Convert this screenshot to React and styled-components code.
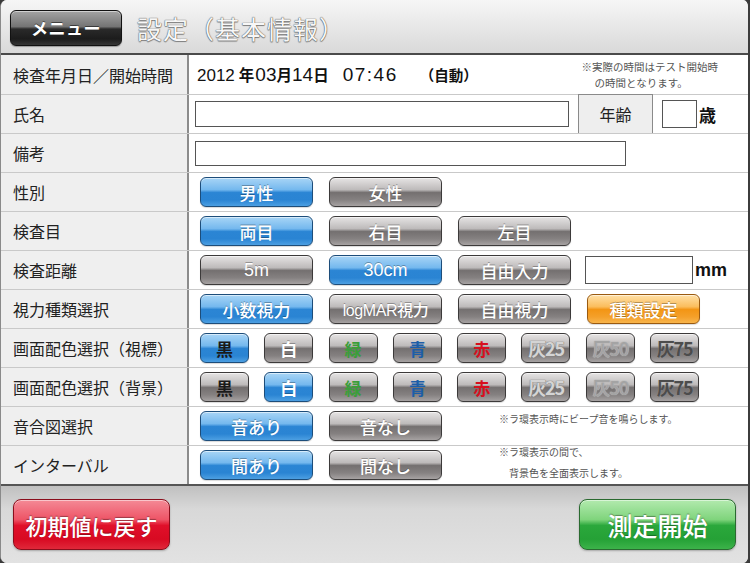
import React from 'react';
import styled, { createGlobalStyle, css } from 'styled-components';

const FONT = `"Liberation Sans", "Noto Sans CJK JP", sans-serif`;
const CJK = `"Noto Sans CJK JP", sans-serif`;

const GlobalStyle = createGlobalStyle`
  html, body { margin: 0; padding: 0; background: #3a3a3a; }
  body { font-family: ${FONT}; }
  * { box-sizing: border-box; }
`;

const Frame = styled.div`
  width: 750px;
  height: 563px;
  display: flex;
  flex-direction: column;
  border-radius: 7px;
  overflow: hidden;
  border-left: 1px solid #8a8a8a;
  border-right: 2px solid #3c3c3c;
  background: #fff;
`;

const Header = styled.header`
  flex: none;
  height: 55px;
  display: flex;
  align-items: center;
  gap: 15px;
  padding: 2px 0 0 9px;
  background: linear-gradient(#f6f6f6, #d9d9d9);
  border-bottom: 2px solid #4a4a4a;
`;

const MenuButton = styled.button`
  width: 112px;
  height: 36px;
  padding: 0;
  border: 1px solid #111;
  border-radius: 6px;
  background: linear-gradient(#a4a4a4 0%, #747474 46%, #2a2a2a 53%, #1c1c1c 82%, #363636 100%);
  box-shadow: inset 0 1px 0 rgba(255, 255, 255, 0.5), 0 1px 1px rgba(0, 0, 0, 0.3);
  color: #fff;
  font: 700 17px ${CJK};
  letter-spacing: 0.5px;
  text-shadow: 0 -1px 0 rgba(0, 0, 0, 0.5);
`;

const Title = styled.h1`
  margin: 0;
  font: 400 25px ${CJK};
  letter-spacing: 1px;
  color: #f7f7f7;
  text-shadow: 0 0 1px #5a5a5a, 0 0 1px #5a5a5a, 0 1px 1px #888;
`;

const Table = styled.div`
  flex: none;
  display: flex;
  flex-direction: column;
`;

const Row = styled.div`
  height: 39px;
  display: flex;
  border-top: 1px solid #c9c9c9;
  &:first-child { border-top: none; }
`;

const Label = styled.div`
  flex: none;
  width: 188px;
  display: flex;
  align-items: center;
  padding-left: 12px;
  background: #efefef;
  border-right: 2px solid #8c8c8c;
  font: 400 16px ${CJK};
  color: #222;
`;

const Value = styled.div`
  flex: 1;
  display: flex;
  align-items: center;
  padding-left: ${p => p.$pad ?? 11}px;
  gap: ${p => p.$gap ?? 0}px;
`;

const DateText = styled.div`
  display: flex;
  align-items: baseline;
  font: 400 17px ${FONT};
  color: #111;
  white-space: nowrap;
`;

const Num = styled.span`
  font-size: ${p => p.$size ?? 17}px;
  margin-left: ${p => p.$ml ?? 0}px;
  margin-right: ${p => p.$mr ?? 0}px;
  letter-spacing: ${p => p.$ls ?? 0}px;
`;

const Unit = styled.span`
  font: 600 15.5px ${CJK};
`;

const Auto = styled.span`
  font: 700 14.5px ${CJK};
  margin-left: 22px;
`;

const Note = styled.div`
  align-self: flex-start;
  margin-top: ${p => p.$top ?? 0}px;
  margin-left: ${p => (p.$left == null ? 'auto' : `${p.$left}px`)};
  margin-right: ${p => p.$right ?? 0}px;
  display: flex;
  flex-direction: column;
  gap: ${p => p.$lineGap ?? 4}px;
  font: 400 ${p => p.$size ?? 10}px ${CJK};
  line-height: 12px;
  color: #555;
  white-space: nowrap;
`;

const NoteLine = styled.span`
  padding-left: ${p => p.$indent ?? 0}px;
`;

const Field = styled.input`
  width: ${p => p.$w}px;
  height: ${p => p.$h}px;
  margin-left: ${p => p.$ml ?? 0}px;
  border: 1px solid #555;
  border-radius: 0;
  background: #fff;
  padding: 0 4px;
  outline: none;
`;

const AgeBox = styled.div`
  width: 75px;
  height: 40px;
  margin-left: 9px;
  display: flex;
  align-items: center;
  justify-content: center;
  background: #eeeeee;
  border: 1px solid #8a8a8a;
  font: 400 16px ${CJK};
  color: #222;
`;

const Suffix = styled.span`
  margin-left: ${p => p.$ml ?? 2}px;
  font: 700 ${p => p.$size ?? 17}px ${p => (p.$latin ? FONT : CJK)};
  color: #111;
  align-self: ${p => (p.$low ? 'flex-end' : 'center')};
  margin-bottom: ${p => (p.$low ? 8 : 0)}px;
`;

const looks = {
  blue: css`
    border-color: #1d4d7a;
    background: linear-gradient(#a8d5f6 0%, #74b8ee 42%, #2b85d4 52%, #2a84d3 78%, #4c9fe2 100%);
  `,
  gray: css`
    border-color: #3c3a3a;
    background: linear-gradient(#e6e4e4 0%, #bdbaba 42%, #747070 52%, #858181 78%, #a6a2a2 100%);
  `,
  orange: css`
    border-color: #9a5a10;
    background: linear-gradient(#ffe0a6 0%, #fbbd5c 42%, #f39514 52%, #f4a02a 78%, #f8b54c 100%);
  `,
};

const GlossButton = styled.button`
  flex: none;
  width: ${p => p.$w ?? 113}px;
  height: 30px;
  padding: 0;
  border: 1px solid;
  border-radius: 6px;
  ${p => looks[p.$look]}
  box-shadow: inset 0 1px 0 rgba(255, 255, 255, 0.55), 0 1px 1px rgba(0, 0, 0, 0.15);
  display: flex;
  align-items: center;
  justify-content: center;
  color: ${p => p.$ink ?? '#fff'};
  font: ${p => p.$weight ?? 500} ${p => p.$size ?? 17}px ${p => (p.$latin ? FONT : CJK)};
  letter-spacing: ${p => p.$ls ?? 0}px;
  text-shadow: ${p => p.$shadow ?? '0 -1px 0 rgba(0,0,0,0.3)'};
  white-space: nowrap;
`;

const Footer = styled.footer`
  flex: 1;
  display: flex;
  justify-content: space-between;
  align-items: flex-start;
  padding: 13px 12px 0 12px;
  border-top: 2px solid #555;
  background: linear-gradient(#c0c0c0 0%, #d8d8d8 30%, #e2e2e2 100%);
`;

const bigLooks = {
  red: css`
    border-color: #8a0e1c;
    background: linear-gradient(#f48a96 0%, #ee5466 40%, #e0102a 52%, #d80a22 80%, #e0283a 100%);
  `,
  green: css`
    border-color: #2a6a30;
    background: linear-gradient(#b2eaae 0%, #7fd47c 40%, #2ba83c 52%, #25a136 80%, #3cb34a 100%);
  `,
};

const BigButton = styled.button`
  width: 157px;
  height: 51px;
  padding: 0;
  border: 1px solid;
  border-radius: 8px;
  ${p => bigLooks[p.$look]}
  box-shadow: inset 0 1px 0 rgba(255, 255, 255, 0.5), 0 1px 2px rgba(0, 0, 0, 0.25);
  color: #fff;
  font: 500 ${p => p.$size ?? 22}px ${CJK};
  text-shadow: 0 -1px 1px rgba(0, 0, 0, 0.35);
`;

const colorSwatches = [
  { t: '黒', ink: '#1a1a1a', shadow: 'none' },
  { t: '白', ink: '#ffffff' },
  { t: '緑', ink: '#3a9e3a', shadow: 'none' },
  { t: '青', ink: '#1d5ea8', shadow: 'none' },
  { t: '赤', ink: '#d6101e', shadow: 'none' },
  { t: '灰25', ink: '#d4d4d4', shadow: '0 0 1px #777, 0 0 1px #777' },
  { t: '灰50', ink: '#a4a4a4', shadow: '0 0 1px #ddd, 0 0 1px #666' },
  { t: '灰75', ink: '#4c4c4c', shadow: '0 0 1px #999' },
];

function ColorRow({ selected }) {
  return (
    <Value $gap={15.3}>
      {colorSwatches.map((c, i) => (
        <GlossButton
          key={c.t}
          $w={49}
          $look={i === selected ? 'blue' : 'gray'}
          $ink={c.ink}
          $shadow={c.shadow}
          $weight={700}
          $size={c.t.length > 1 ? 18 : 17}
          $ls={c.t.length > 1 ? -1.2 : 0}
        >
          {c.t}
        </GlossButton>
      ))}
    </Value>
  );
}

export default function App() {
  return (
    <>
      <GlobalStyle />
      <Frame>
        <Header>
          <MenuButton>メニュー</MenuButton>
          <Title>設定（基本情報）</Title>
        </Header>

        <Table>
          <Row>
            <Label>検査年月日／開始時間</Label>
            <Value $pad={8}>
              <DateText>
                <Num $mr={4}>2012</Num>
                <Unit>年</Unit>
                <Num $size={19} $ml={1}>03</Num>
                <Unit>月</Unit>
                <Num $size={19}>14</Num>
                <Unit>日</Unit>
                <Num $size={19} $ml={14} $ls={1.5}>07:46</Num>
                <Auto>（自動）</Auto>
              </DateText>
              <Note $top={6} $right={30} $size={10.5} $lineGap={4}>
                <NoteLine>※実際の時間はテスト開始時</NoteLine>
                <NoteLine $indent={13}>の時間となります。</NoteLine>
              </Note>
            </Value>
          </Row>

          <Row>
            <Label>氏名</Label>
            <Value $pad={6}>
              <Field $w={374} $h={26} />
              <AgeBox>年齢</AgeBox>
              <Field $w={35} $h={28} $ml={9} />
              <Suffix>歳</Suffix>
            </Value>
          </Row>

          <Row>
            <Label>備考</Label>
            <Value $pad={6}>
              <Field $w={431} $h={25} />
            </Value>
          </Row>

          <Row>
            <Label>性別</Label>
            <Value $gap={16}>
              <GlossButton $look="blue">男性</GlossButton>
              <GlossButton $look="gray">女性</GlossButton>
            </Value>
          </Row>

          <Row>
            <Label>検査目</Label>
            <Value $gap={16}>
              <GlossButton $look="blue">両目</GlossButton>
              <GlossButton $look="gray">右目</GlossButton>
              <GlossButton $look="gray">左目</GlossButton>
            </Value>
          </Row>

          <Row>
            <Label>検査距離</Label>
            <Value $gap={16}>
              <GlossButton $look="gray" $latin $size={18}>5m</GlossButton>
              <GlossButton $look="blue" $latin $size={18}>30cm</GlossButton>
              <GlossButton $look="gray">自由入力</GlossButton>
              <Field $w={108} $h={28} $ml={-2} />
              <Suffix $latin $size={18} $low $ml={-14}>mm</Suffix>
            </Value>
          </Row>

          <Row>
            <Label>視力種類選択</Label>
            <Value $gap={16}>
              <GlossButton $look="blue">小数視力</GlossButton>
              <GlossButton $look="gray" $latin $size={16} $ls={-0.4}>logMAR視力</GlossButton>
              <GlossButton $look="gray">自由視力</GlossButton>
              <GlossButton $look="orange">種類設定</GlossButton>
            </Value>
          </Row>

          <Row>
            <Label>画面配色選択（視標）</Label>
            <ColorRow selected={0} />
          </Row>

          <Row>
            <Label>画面配色選択（背景）</Label>
            <ColorRow selected={1} />
          </Row>

          <Row>
            <Label>音合図選択</Label>
            <Value $gap={16}>
              <GlossButton $look="blue">音あり</GlossButton>
              <GlossButton $look="gray">音なし</GlossButton>
              <Note $left={41} $top={6}>
                <NoteLine>※ラ環表示時にビープ音を鳴らします。</NoteLine>
              </Note>
            </Value>
          </Row>

          <Row>
            <Label>インターバル</Label>
            <Value $gap={16}>
              <GlossButton $look="blue">間あり</GlossButton>
              <GlossButton $look="gray">間なし</GlossButton>
              <Note $left={41} $top={0} $lineGap={9}>
                <NoteLine>※ラ環表示の間で、</NoteLine>
                <NoteLine $indent={10}>背景色を全面表示します。</NoteLine>
              </Note>
            </Value>
          </Row>
        </Table>

        <Footer>
          <BigButton $look="red">初期値に戻す</BigButton>
          <BigButton $look="green" $size={25}>測定開始</BigButton>
        </Footer>
      </Frame>
    </>
  );
}
